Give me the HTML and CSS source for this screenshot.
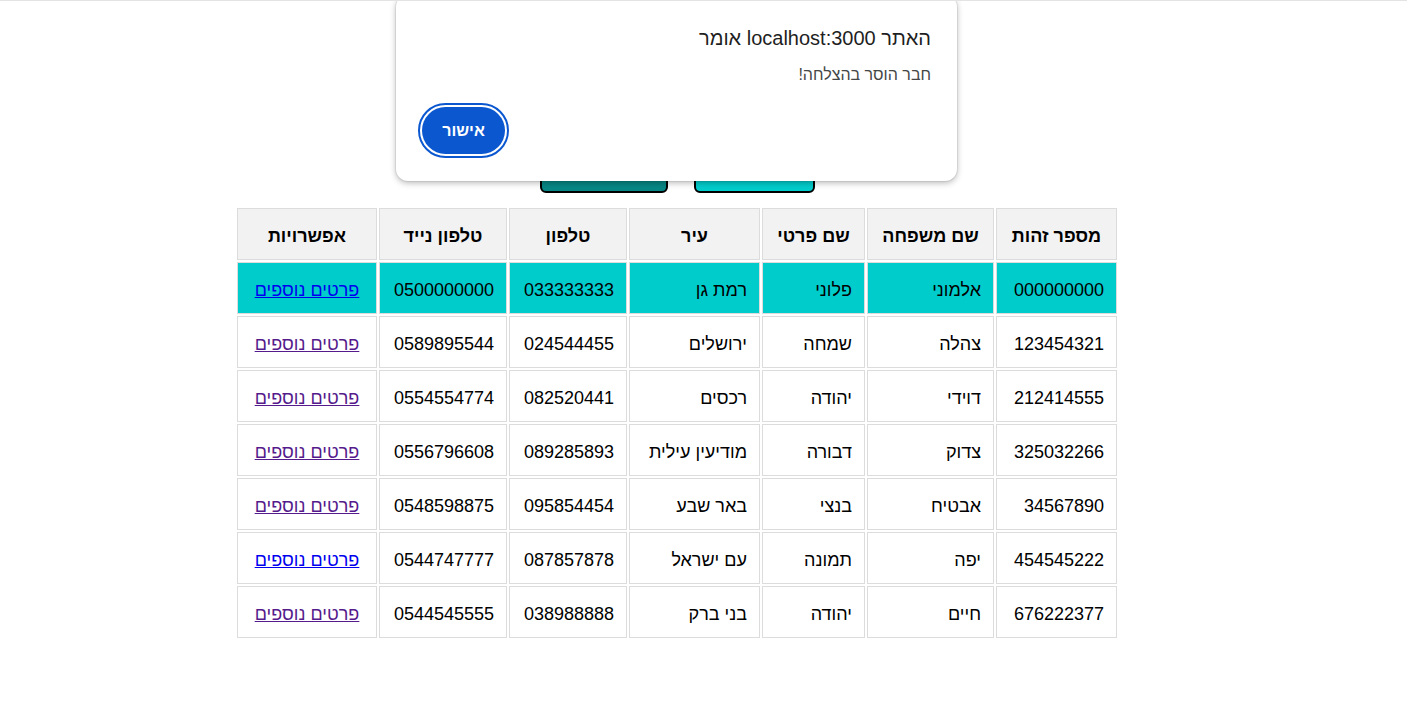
FILE: index.html
```html
<!DOCTYPE html>
<html lang="he" dir="rtl">
<head>
<meta charset="utf-8">
<title>חברים</title>
<link rel="stylesheet" href="styles.css">
</head>
<body>
<div class="page">
  <div class="actions">
    <button class="btn btn-light" type="button">הוסף חבר</button>
    <button class="btn btn-dark" type="button">מחק חבר</button>
  </div>
  <table class="members">
    <thead>
      <tr>
        <th class="c-id">מספר זהות</th>
        <th class="c-last">שם משפחה</th>
        <th class="c-first">שם פרטי</th>
        <th class="c-city">עיר</th>
        <th class="c-phone">טלפון</th>
        <th class="c-mobile">טלפון נייד</th>
        <th class="c-opt">אפשרויות</th>
      </tr>
    </thead>
    <tbody>
      <tr class="selected">
        <td>000000000</td><td>אלמוני</td><td>פלוני</td><td>רמת גן</td><td>033333333</td><td>0500000000</td><td class="opt"><a href="#a" class="link">פרטים נוספים</a></td>
      </tr>
      <tr>
        <td>123454321</td><td>צהלה</td><td>שמחה</td><td>ירושלים</td><td>024544455</td><td>0589895544</td><td class="opt"><a href="#b" class="link visited">פרטים נוספים</a></td>
      </tr>
      <tr>
        <td>212414555</td><td>דוידי</td><td>יהודה</td><td>רכסים</td><td>082520441</td><td>0554554774</td><td class="opt"><a href="#c" class="link visited">פרטים נוספים</a></td>
      </tr>
      <tr>
        <td>325032266</td><td>צדוק</td><td>דבורה</td><td>מודיעין עילית</td><td>089285893</td><td>0556796608</td><td class="opt"><a href="#d" class="link visited">פרטים נוספים</a></td>
      </tr>
      <tr>
        <td>34567890</td><td>אבטיח</td><td>בנצי</td><td>באר שבע</td><td>095854454</td><td>0548598875</td><td class="opt"><a href="#e" class="link visited">פרטים נוספים</a></td>
      </tr>
      <tr>
        <td>454545222</td><td>יפה</td><td>תמונה</td><td>עם ישראל</td><td>087857878</td><td>0544747777</td><td class="opt"><a href="#f" class="link">פרטים נוספים</a></td>
      </tr>
      <tr>
        <td>676222377</td><td>חיים</td><td>יהודה</td><td>בני ברק</td><td>038988888</td><td>0544545555</td><td class="opt"><a href="#g" class="link visited">פרטים נוספים</a></td>
      </tr>
    </tbody>
  </table>
</div>

<div class="dialog" role="alertdialog">
  <div class="dialog-title">האתר localhost:3000 אומר</div>
  <div class="dialog-msg">חבר הוסר בהצלחה!</div>
  <div class="dialog-actions">
    <button class="ok" type="button">אישור</button>
  </div>
</div>
</body>
</html>
```

FILE: styles.css
```css
html, body {
  margin: 0;
  padding: 0;
}
body {
  border-top: 1px solid #e3e3e3;
  background: #fff;
  font-family: "Liberation Sans", "Open Sans", sans-serif;
  color: #000;
  position: relative;
  min-height: 727px;
}
.page {
  display: flex;
  flex-direction: column;
  align-items: center;
  padding-right: 53px;
  padding-top: 147px;
}
.actions {
  display: flex;
  gap: 26px;
  height: 45px;
}
.btn {
  box-sizing: border-box;
  height: 45px;
  border: 2px solid #000;
  border-radius: 6px;
  font-family: inherit;
  font-size: 16px;
  color: #000;
}
.btn-light {
  width: 121px;
  background: #00cccc;
}
.btn-dark {
  width: 128px;
  background: #068785;
}
.members {
  margin-top: 13px;
  border-spacing: 2px;
  table-layout: fixed;
  width: 884px;
  font-size: 18px;
}
.members th,
.members td {
  box-sizing: border-box;
  border: 1px solid #dcdcdc;
  padding: 4px 12px 0;
  height: 52px;
  line-height: 24px;
  white-space: nowrap;
}
.members th {
  background: #f2f2f2;
  font-weight: 700;
  text-align: center;
}
.members td {
  text-align: right;
}
.members td.opt {
  text-align: center;
}
.c-id { width: 121px; }
.c-last { width: 127px; }
.c-first { width: 103px; }
.c-city { width: 131px; }
.c-phone { width: 118px; }
.c-mobile { width: 128px; }
.c-opt { width: 140px; }
.selected td {
  background: #00cccc;
}
.link {
  color: #0000ee;
  text-decoration: underline;
}
.link.visited {
  color: #551a8b;
}

.dialog {
  position: absolute;
  left: 396px;
  top: -6px;
  width: 561px;
  height: 186px;
  box-sizing: border-box;
  padding: 29px 26px 0 26px;
  background: #fff;
  border-radius: 12px;
  box-shadow: 0 0 0 1px rgba(0,0,0,0.06), 0 2px 6px rgba(0,0,0,0.28);
  display: flex;
  flex-direction: column;
}
.dialog-title {
  font-size: 20px;
  line-height: 28px;
  color: #1f1f1f;
}
.dialog-msg {
  margin-top: 12px;
  font-size: 16px;
  line-height: 22px;
  color: #444746;
}
.dialog-actions {
  display: flex;
  justify-content: flex-end;
  margin-top: 21px;
}
.ok {
  width: 83px;
  height: 47px;
  border: none;
  border-radius: 24px;
  background: #0b57d0;
  color: #fff;
  font-family: inherit;
  font-weight: 700;
  font-size: 16px;
  outline: 2px solid #0b57d0;
  outline-offset: 2px;
}
```
